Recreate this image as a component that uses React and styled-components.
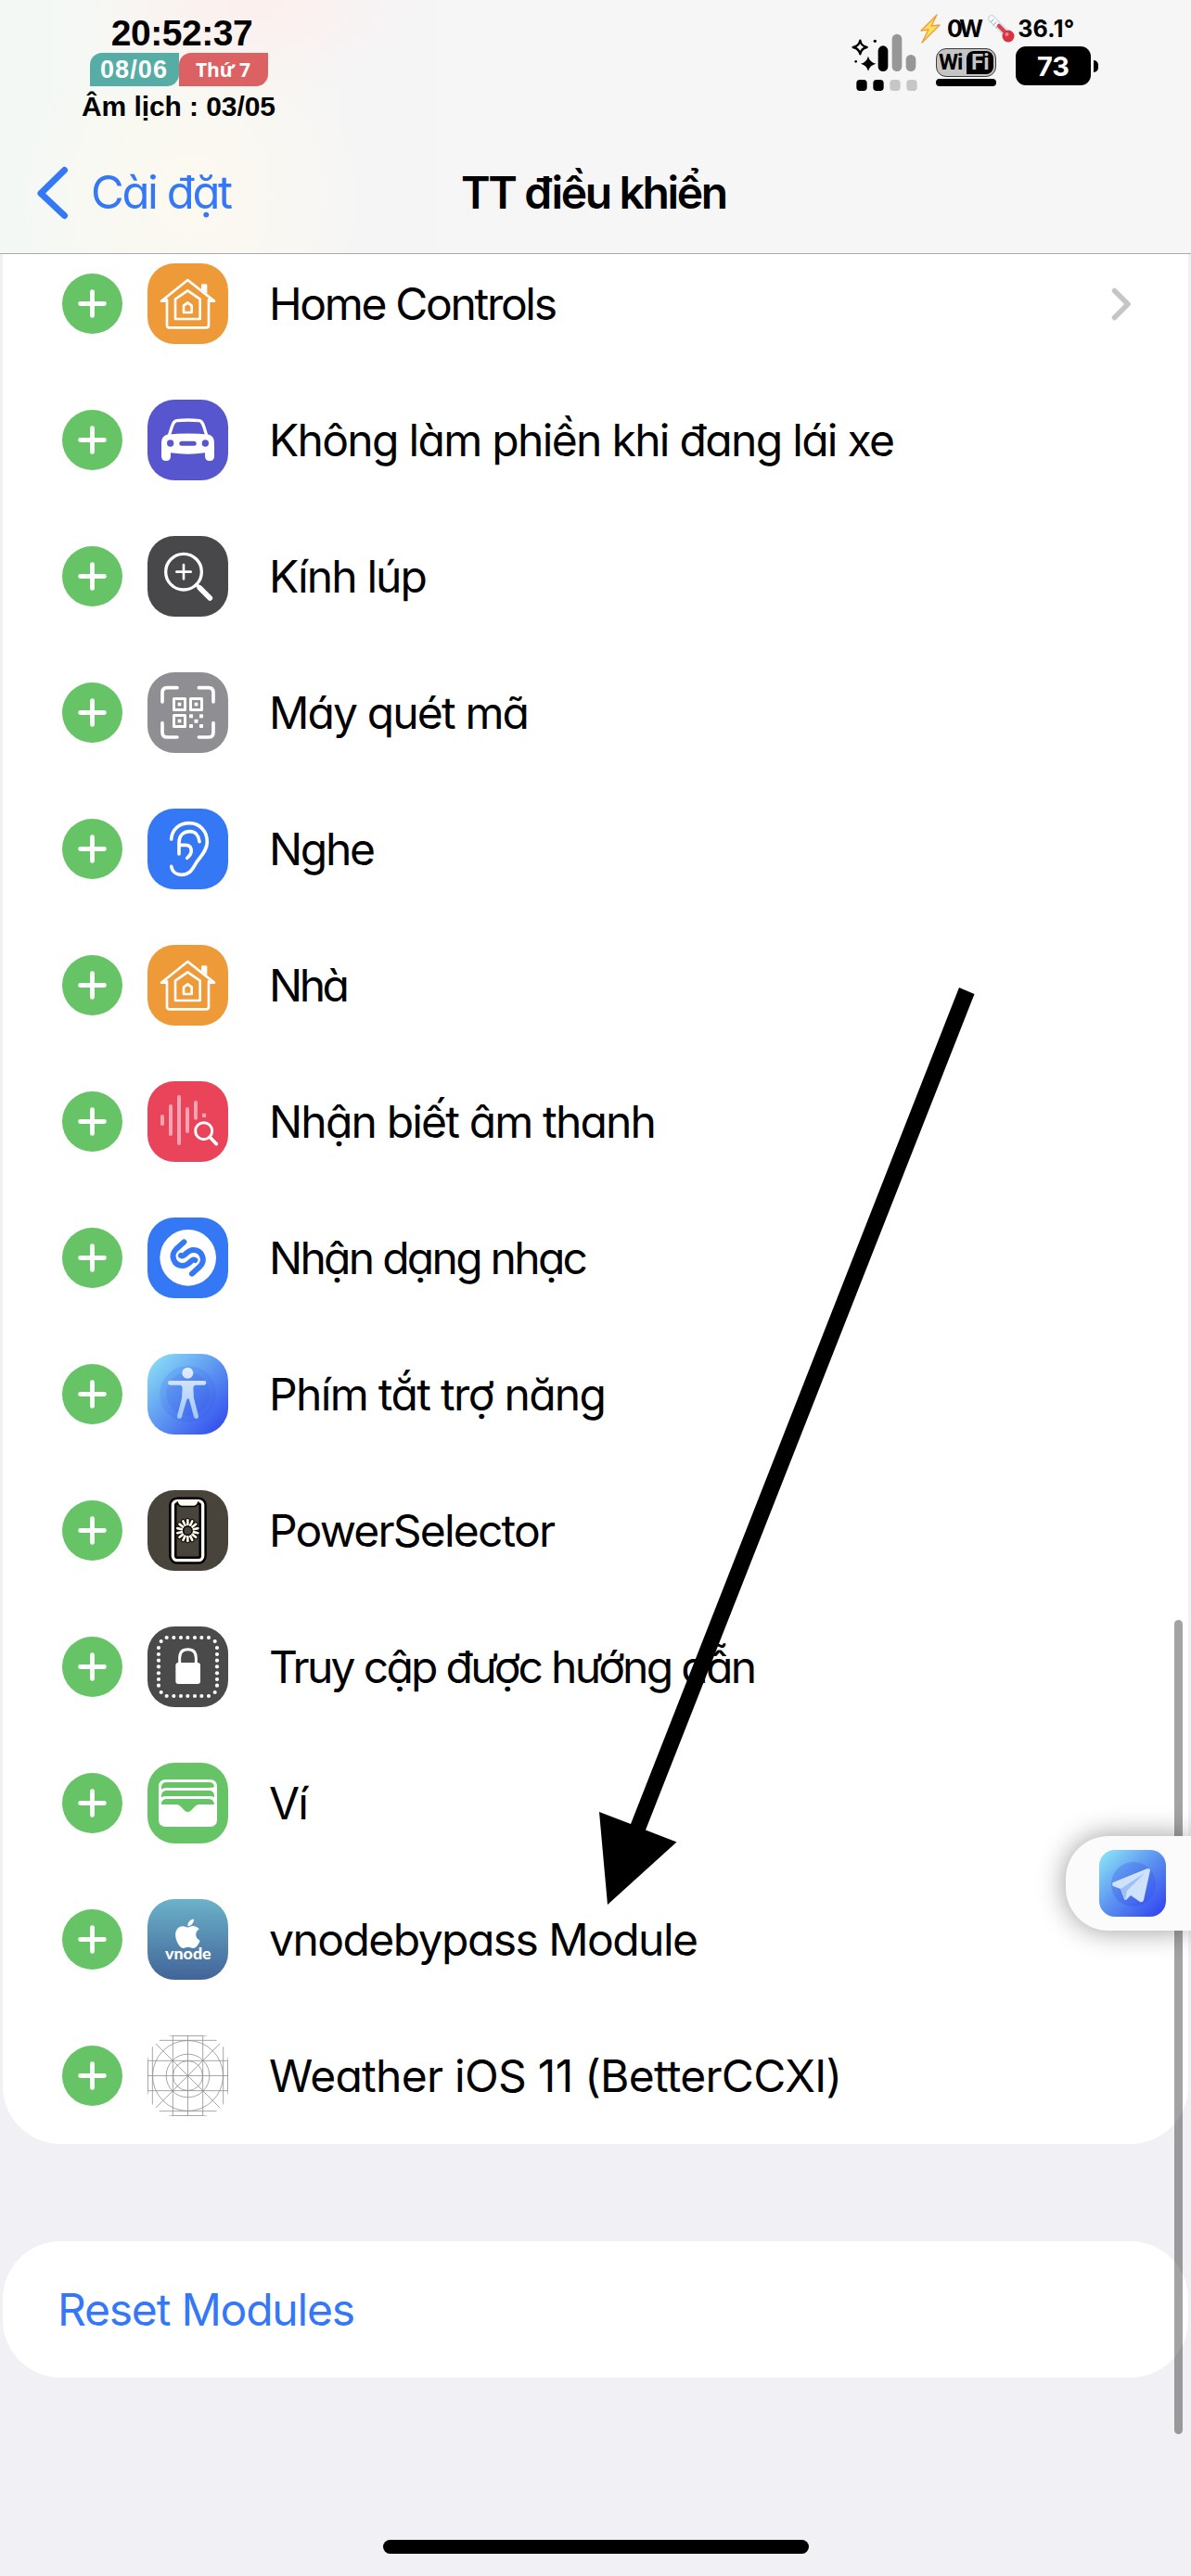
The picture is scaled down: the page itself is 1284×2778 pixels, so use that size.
import React, { useLayoutEffect, useRef, useState } from "react";
import styled, { createGlobalStyle } from "styled-components";
import { FaApple } from "react-icons/fa";

const GlobalStyle = createGlobalStyle`
  *, *::before, *::after { box-sizing: border-box; }
  html, body { margin: 0; padding: 0; }
  body { background: #f0f0f5; }
  svg { display: block; flex: none; }
`;

const Screen = styled.div`
  position: relative;
  width: 1284px;
  height: 2778px;
  overflow: hidden;
  display: flex;
  flex-direction: column;
  background: #f0f0f5;
  color: #000;
  font-family: Inter, "Noto Sans", sans-serif;
  font-feature-settings: "cv11" 1;
`;

/* ---------- text whose tracking is computed to span a given width ---------- */

const Fitted = styled.span`
  display: inline-block;
  white-space: pre;
  flex: none;
`;

function FitText({ width, children, className }) {
  const ref = useRef(null);
  const [spacing, setSpacing] = useState(0);
  useLayoutEffect(() => {
    const el = ref.current;
    el.style.letterSpacing = "0px";
    const natural = el.getBoundingClientRect().width;
    const next = (width - natural) / (children.length - 1);
    el.style.letterSpacing = `${next}px`;
    setSpacing(next);
  }, [width, children]);
  return (
    <Fitted ref={ref} className={className} style={{ letterSpacing: `${spacing}px` }}>
      {children}
    </Fitted>
  );
}

/* ---------- header ---------- */

const Header = styled.header`
  flex: none;
  height: 274px;
  border-bottom: 1px solid #a9a9ad;
  display: flex;
  flex-direction: column;
  z-index: 1;
  background:
    radial-gradient(ellipse 190px 110px at 270px 0, rgba(255, 236, 234, 0.7), rgba(255, 236, 234, 0)),
    radial-gradient(ellipse 190px 190px at 205px 210px, rgba(252, 249, 238, 0.85), rgba(252, 249, 238, 0)),
    linear-gradient(90deg, #f3f8f5 0, #f6f8f4 130px, #f7f6f4 270px, #f5f5f6 400px, #f6f6f6 700px, #f6f6f6 100%);
`;

const StatusBar = styled.div`
  height: 142px;
  display: flex;
  justify-content: space-between;
`;

const ClockBlock = styled.div`
  width: 385px;
  padding-top: 15px;
  display: flex;
  flex-direction: column;
  align-items: center;
  font-family: "Liberation Sans", Arial, sans-serif;
  font-weight: 700;
`;

const Time = styled(FitText)`
  font-size: 39px;
  line-height: 42px;
  margin-left: 7px;
`;

const Badges = styled.div`
  display: flex;
  height: 36px;
`;

const Badge = styled.div`
  width: 96px;
  height: 36px;
  display: flex;
  align-items: center;
  justify-content: center;
  color: #fff;
  background: ${(p) => p.$color};
  border-radius: 13px 0 13px 0;
  font-size: ${(p) => p.$size}px;
  font-family: ${(p) => p.$font};
  line-height: 36px;
`;

const Lunar = styled(FitText)`
  font-size: 30px;
  line-height: 34px;
  margin-top: 5px;
`;

const Indicators = styled.div`
  display: flex;
  padding: 14px 100px 0 0;
`;

const IndicatorColumn = styled.div`
  display: flex;
  flex-direction: column;
  margin-left: 3px;
`;

const Readings = styled.div`
  display: flex;
  align-items: center;
  height: 34px;
  font-weight: 700;
  font-size: 25px;
  line-height: 34px;
`;

const ReadingPower = styled(FitText)`
  margin-left: 7px;
`;

const Thermo = styled.div`
  margin: 0 2px 0 9px;
`;

const PowerIcons = styled.div`
  display: flex;
  align-items: flex-start;
  padding-left: 17px;
`;

const WifiColumn = styled.div`
  display: flex;
  flex-direction: column;
  gap: 2px;
  padding-top: 4px;
  margin-right: 21px;
`;

const WifiBadge = styled.div`
  width: 65px;
  height: 31px;
  display: flex;
  padding: 2px;
  border: 1.5px solid #3a3a3a;
  border-radius: 11px;
  background: #c4c4c4;
  font-family: Roboto, "Open Sans", sans-serif;
  font-weight: 700;
  font-size: 24px;
  line-height: 25px;
`;

const WifiLeft = styled.span`
  width: 30px;
  letter-spacing: -1px;
`;

const WifiRight = styled.span`
  width: 29px;
  padding-left: 5px;
  color: #c4c4c4;
  background: #000;
  border-radius: 8px 8px 8px 0;
`;

const WifiBar = styled.div`
  height: 8px;
  border-radius: 4px;
  background: #000;
`;

const BatteryWrap = styled.div`
  display: flex;
  align-items: center;
  gap: 3px;
  padding-top: 2px;
`;

const BatteryBody = styled.div`
  width: 81px;
  height: 42px;
  border-radius: 11px;
  background: #000;
  color: #fff;
  font-size: 29px;
  font-weight: 700;
  line-height: 43px;
  text-align: center;
`;

const BatteryNub = styled.div`
  width: 5px;
  height: 13px;
  border-radius: 0 6px 6px 0;
  background: #000;
`;

const NavBar = styled.div`
  flex: 1;
  display: grid;
  grid-template-columns: 497px 1fr;
  align-items: center;
`;

const Back = styled.div`
  display: flex;
  align-items: center;
  padding-left: 39px;
  gap: 24px;
  color: #3478f6;
  font-size: 49px;
  line-height: 60px;
`;

const Title = styled(FitText)`
  justify-self: start;
  font-size: 48px;
  font-weight: 600;
  line-height: 60px;
`;

/* ---------- list ---------- */

const Body = styled.main`
  flex: 1;
  min-height: 0;
  overflow: hidden;
  padding: 0 3px;
`;

const Card = styled.section`
  background: #fff;
  border-radius: ${(p) => (p.$continued ? "0 0 62px 62px" : "62px")};
  overflow: hidden;
  margin-top: ${(p) => p.$top}px;
`;

const Row = styled.div`
  height: 147px;
  display: flex;
  align-items: center;
  padding: 0 61px 0 64px;
`;

const AddButton = styled.div`
  width: 65px;
  height: 65px;
  border-radius: 50%;
  background: #66c466;
  display: flex;
  align-items: center;
  justify-content: center;
`;

const Tile = styled.div`
  width: 87px;
  height: 87px;
  margin: 0 44px 0 27px;
  border-radius: 29px;
  overflow: hidden;
  background: ${(p) => p.$bg};
`;

const Label = styled(FitText)`
  font-size: 48px;
  line-height: 60px;
`;

const Spacer = styled.div`
  flex: 1;
`;

const ResetRow = styled(Row)`
  padding-left: 59px;
  color: #3478f6;
`;

/* ---------- overlays ---------- */

const ScrollThumb = styled.div`
  position: absolute;
  left: 1266px;
  top: 1747px;
  width: 9px;
  height: 878px;
  border-radius: 5px;
  background: rgba(0, 0, 0, 0.36);
`;

const SideTab = styled.div`
  position: absolute;
  left: 1149px;
  top: 1980px;
  width: 135px;
  height: 102px;
  padding: 15px 0 0 36px;
  border-radius: 46px 0 0 46px;
  background: #fbfbfb;
  box-shadow: 0 0 30px rgba(0, 0, 0, 0.4);
`;

const SideIcon = styled.div`
  width: 72px;
  height: 72px;
  border-radius: 17px;
  overflow: hidden;
  background: linear-gradient(135deg, #8eeaf8 0%, #5f98f1 45%, #2d3df0 100%);
`;

const ArrowLayer = styled.svg`
  position: absolute;
  left: 0;
  top: 0;
`;

const HomeIndicator = styled.div`
  position: absolute;
  left: 413px;
  top: 2739px;
  width: 459px;
  height: 15px;
  border-radius: 8px;
  background: #000;
`;

/* ---------- drawings ---------- */

const Glyph = ({ children, ...rest }) => (
  <svg width="87" height="87" viewBox="0 0 261 261" fill="none" stroke="#fff" strokeLinecap="round" strokeLinejoin="round" {...rest}>
    {children}
  </svg>
);

const HomeGlyph = () => (
  <Glyph strokeWidth="8">
    <path d="M174 84V71Q174 67 178 67H189Q193 67 193 71V98Z" fill="#fff" stroke="none" />
    <path d="M63 118V200Q63 208 71 208H190Q198 208 198 200V118" />
    <path d="M45 122L130 54L216 122H204M45 122H60" />
    <path d="M90 180V116L130 88L170 116V180Z" />
    <path d="M117 159V137L130 127L143 137V159Z" />
  </Glyph>
);

const CarGlyph = () => (
  <Glyph>
    <path d="M69 118C78 96 80 70 94 68Q131 64 168 68C181 70 184 96 192 118" strokeWidth="10" />
    <path d="M45 138Q46 118 62 113Q131 106 200 113Q215 118 216 138V183Q216 198 201 198Q186 198 186 183V172Q131 180 75 172V183Q75 198 60 198Q45 198 45 183Z" fill="#fff" stroke="none" />
    <g fill="#5856ce" stroke="none">
      <circle cx="74" cy="141" r="11" />
      <circle cx="187" cy="141" r="11" />
      <rect x="103" y="134" width="55" height="15" rx="7.5" />
    </g>
  </Glyph>
);

const MagnifierGlyph = () => (
  <Glyph>
    <circle cx="117" cy="116" r="58" strokeWidth="10" />
    <path d="M117 93V139M94 116H140" strokeWidth="8" />
    <path d="M159 158L170 169" strokeWidth="12" />
    <path d="M169 168L202 201" strokeWidth="17" />
  </Glyph>
);

const QrGlyph = () => (
  <Glyph>
    <path strokeWidth="11" d="M48 96V66Q48 50 64 50H96M166 50H197Q213 50 213 66V96M213 164V194Q213 210 197 210H166M96 210H64Q48 210 48 194V164" />
    {[[81, 81], [135, 81], [81, 135]].map(([x, y]) => (
      <g key={`${x}-${y}`}>
        <rect x={x + 4.5} y={y + 4.5} width="36" height="36" strokeWidth="9" />
        <rect x={x + 17} y={y + 17} width="11" height="11" fill="#fff" stroke="none" />
      </g>
    ))}
    {[[135, 136], [168, 136], [151.5, 152], [135, 168], [168, 168]].map(([x, y]) => (
      <rect key={`${x}-${y}`} x={x} y={y} width="12" height="12" rx="2" fill="#fff" stroke="none" />
    ))}
  </Glyph>
);

const EarGlyph = () => (
  <Glyph strokeWidth="11">
    <path d="M77 99C80 66 104 47 135 47C169 47 193 73 193 108C193 135 173 153 160 172C147 192 140 214 110 214C91 214 79 202 77 187" />
    <path d="M168 107C166 87 155 74 137 74C115 74 102 88 102 110V147" />
    <path d="M104 118H124C144 118 149 144 128 160" />
  </Glyph>
);

const SoundGlyph = () => (
  <Glyph>
    <path strokeWidth="12" stroke="#f8a5b1" d="M48 114V138M75 81V171M102 51V201M129 90V162M156 69V119" />
    <path strokeWidth="12" stroke="#f8a5b1" strokeLinecap="butt" d="M183 104V117" />
    <circle cx="182" cy="161" r="36" fill="#ea445a" stroke="none" />
    <circle cx="182" cy="161" r="27" strokeWidth="9" />
    <path d="M203 182L223 203" strokeWidth="11" />
  </Glyph>
);

const ShazamGlyph = () => (
  <Glyph>
    <circle cx="131" cy="130" r="91" fill="#fff" stroke="none" />
    <g stroke="#3478f6" strokeWidth="18">
      <path d="M118 79L93 102C71 124 87 156 114 156C128 156 135 146 144 139Q149 135 154 138" />
      <path d="M144 182L169 159C191 137 175 105 148 105C134 105 127 115 118 122Q113 126 108 123" />
    </g>
  </Glyph>
);

const PersonGlyph = () => (
  <Glyph>
    <circle cx="131" cy="130" r="91" fill="#2745e8" fillOpacity=".12" stroke="none" />
    <circle cx="131" cy="130" r="70" fill="#2745e8" fillOpacity=".12" stroke="none" />
    <defs>
      <linearGradient id="person" x1="0" y1="45" x2="0" y2="211" gradientUnits="userSpaceOnUse">
        <stop stopColor="#e3edfd" />
        <stop offset="1" stopColor="#9fc6f9" />
      </linearGradient>
    </defs>
    <g fill="url(#person)" stroke="none">
      <circle cx="130" cy="62" r="18" />
      <path d="M73 87H183Q190 87 190 94Q190 101 183 101H156Q148 102 148 112L150 143L165 201Q166 210 158 210Q152 210 150 204L135 148Q131 142 127 148L111 204Q109 210 103 210Q95 210 96 201L111 143L113 112Q113 102 105 101H73Q66 101 66 94Q66 87 73 87Z" />
    </g>
  </Glyph>
);

const PhoneGlyph = () => (
  <Glyph>
    <rect x="82" y="35" width="97" height="192" rx="14" stroke="#000" strokeWidth="25" />
    <rect x="82" y="35" width="97" height="192" rx="14" stroke="#fffdf2" strokeWidth="10" />
    <path d="M94 37H167Q163 54 152 55H109Q98 54 94 37Z" fill="#000" stroke="none" />
    <path d="M98 36H163Q160 49 151 50H110Q101 49 98 36Z" fill="#fffbe8" stroke="none" />
    {[["#000", 14], ["#fffbe8", 8]].map(([color, w]) =>
      Array.from({ length: 14 }, (_, i) => (
        <path key={`${color}${i}`} d="M130 112V97" stroke={color} strokeWidth={w} transform={`rotate(${(i * 360) / 14} 130 131)`} />
      ))
    )}
    <circle cx="130" cy="131" r="16" fill="#000" stroke="none" />
    <circle cx="130" cy="131" r="12" fill="#49443b" stroke="none" />
  </Glyph>
);

const lockDots = [
  ...[62, 85, 108, 130, 153, 175, 198].flatMap((v) => [[v, 36], [v, 225]]),
  ...[69, 90, 110, 130, 151, 171, 191].flatMap((v) => [[36, v], [225, v]]),
  [44, 48], [218, 48], [44, 213], [218, 213],
];

const LockGlyph = () => (
  <Glyph>
    <g fill="#fff" stroke="none">
      {lockDots.map(([x, y]) => (
        <circle key={`${x}-${y}`} cx={x} cy={y} r="6.2" />
      ))}
      <rect x="91" y="117" width="80" height="69" rx="9" />
    </g>
    <path strokeWidth="9" d="M104 122V101Q104 74 130.500 74Q157 74 157 101V122" />
  </Glyph>
);

const WalletGlyph = () => (
  <Glyph>
    <path fill="#fff" stroke="none" d="M60 54H201Q225 54 225 78V184Q225 207 201 207H60Q36 207 36 184V78Q36 54 60 54Z" />
    <g fill="#66c466" stroke="none">
      <path d="M45 78Q46 63 62 63H199Q215 63 216 78Q210 81 198 81H63Q50 81 45 86Z" />
      <path d="M45 105Q47 90 62 90H199Q214 90 216 105V112Q212 108 198 108H63Q50 108 45 112Z" />
      <path d="M45 132Q47 117 62 117H199Q214 117 216 135H168C150 135 145 159 130.500 159C116 159 111 135 93 135H45Z" />
    </g>
  </Glyph>
);

const VnodeGlyph = () => (
  <Glyph>
    <FaApple x="76" y="58" size={108} color="#fff" stroke="none" />
    <text x="57" y="195" fill="#fff" stroke="none" fontFamily="Lato, sans-serif" fontWeight="900" fontSize="50" textLength="149" lengthAdjust="spacingAndGlyphs">
      vnode
    </text>
  </Glyph>
);

const GridGlyph = () => (
  <Glyph stroke="#8f8f91" strokeWidth="2.4" strokeLinecap="butt">
    <path d="M82 0V261M130.500 0V261M179 0V261M0 82H261M0 130.500H261M0 179H261M38 16H224M38 245H224M16 36V224M245 36V224M70 1.500H192M70 259.500H192M1.500 70V192M259.500 70V192M26 26L235 235M235 26L26 235" />
    <circle cx="130.500" cy="130.500" r="114" />
    <circle cx="130.500" cy="130.500" r="70" />
    <circle cx="130.500" cy="130.500" r="48" />
  </Glyph>
);

const PlusIcon = () => (
  <svg width="31" height="31" viewBox="0 0 31 31" stroke="#fff" strokeWidth="4.800" strokeLinecap="round">
    <path d="M15.500 2.600V28.400M2.600 15.500H28.400" />
  </svg>
);

const BackChevron = () => (
  <svg width="35" height="58" viewBox="0 0 35 58" fill="none" stroke="#3478f6" strokeWidth="7" strokeLinecap="round" strokeLinejoin="round">
    <path d="M30.500 4.500L5 29.500L30.500 53.500" />
  </svg>
);

const RowChevron = () => (
  <svg width="22" height="36" viewBox="0 0 22 36" fill="none" stroke="#c5c5c7" strokeWidth="5.500" strokeLinecap="round" strokeLinejoin="round">
    <path d="M3.500 3.500L18 18L3.500 32.500" />
  </svg>
);

const SignalIcon = () => (
  <svg width="72" height="86" viewBox="176 42 216 258">
    <path d="M207 131Q210 149 229 153Q210 157 207 175Q203 157 184 153Q203 149 207 131Z" fill="none" stroke="#000" strokeWidth="7" strokeLinejoin="round" />
    <path d="M233 182Q238 201 258 206Q238 211 233 230Q228 211 209 206Q228 201 233 182Z" />
    <circle cx="255" cy="133" r="5" />
    <circle cx="193" cy="199" r="4" />
    <rect x="265" y="148" width="32" height="83" rx="16" />
    <rect x="310" y="110" width="32" height="121" rx="16" fill="#979797" />
    <rect x="355" y="177" width="32" height="54" rx="16" fill="#979797" />
    {[195, 249, 303, 357].map((x, i) => (
      <rect key={x} x={x} y="258" width="34" height="36" rx="11" fill={i < 2 ? "#000" : "#c6c6c6"} />
    ))}
  </svg>
);

const BoltIcon = () => (
  <svg width="22" height="32" viewBox="0 0 22 32">
    <path d="M18 1L1 18L9 17L2 31L21 12L12 13Z" fill="#fde05c" stroke="#eda03a" strokeWidth="1.400" strokeLinejoin="round" />
  </svg>
);

const ThermometerIcon = () => (
  <svg width="30" height="31" viewBox="0 0 30 31" fill="none" strokeLinecap="round">
    <path d="M4 4L20 20" stroke="#c9dbe0" strokeWidth="8" />
    <path d="M4 4L20 20" stroke="#f4f8f9" strokeWidth="5.500" />
    <path d="M3 8L6 5M6 11L9 8M9 14L12 11" stroke="#8fa3a8" strokeWidth="1" />
    <path d="M12 12L20 20" stroke="#d6434f" strokeWidth="4.500" />
    <circle cx="22" cy="23" r="6.500" fill="#d8333f" />
    <circle cx="20.500" cy="21" r="2" fill="#f08a90" />
  </svg>
);

const PlaneIcon = () => (
  <svg width="72" height="72" viewBox="0 0 72 72">
    <circle cx="37" cy="37" r="24" fill="#2745e8" fillOpacity=".25" />
    <path d="M15 35Q13 37 15 39L23 42L27 53Q28 55 30 53L34 49L44 56Q47 57 48 54L55 22Q55 20 52 20Z" fill="#cfe2fc" />
    <path d="M23 42L49 25L30 44L28 54Z" fill="#9dc0f8" />
  </svg>
);

/* ---------- data ---------- */

const modules = [
  { name: "Home Controls", width: 311, bg: "#ee9a38", Icon: HomeGlyph, chevron: true },
  { name: "Không làm phiền khi đang lái xe", width: 675, bg: "#5856ce", Icon: CarGlyph },
  { name: "Kính lúp", width: 171, bg: "#48484a", Icon: MagnifierGlyph },
  { name: "Máy quét mã", width: 281, bg: "#8e8e93", Icon: QrGlyph },
  { name: "Nghe", width: 115, bg: "#3478f6", Icon: EarGlyph },
  { name: "Nhà", width: 87, bg: "#ee9a38", Icon: HomeGlyph },
  { name: "Nhận biết âm thanh", width: 418, bg: "#ea445a", Icon: SoundGlyph },
  { name: "Nhận dạng nhạc", width: 344, bg: "#3478f6", Icon: ShazamGlyph },
  { name: "Phím tắt trợ năng", width: 364, bg: "linear-gradient(135deg, #8fe6f6 0%, #619df2 45%, #2d42ee 100%)", Icon: PersonGlyph },
  { name: "PowerSelector", width: 309, bg: "#49443b", Icon: PhoneGlyph },
  { name: "Truy cập được hướng dẫn", width: 526, bg: "#4a4a4a", Icon: LockGlyph },
  { name: "Ví", width: 43, bg: "#66c466", Icon: WalletGlyph },
  { name: "vnodebypass Module", width: 463, bg: "linear-gradient(#6cb2c9, #416499)", Icon: VnodeGlyph },
  { name: "Weather iOS 11 (BetterCCXI)", width: 618, bg: "#fff", Icon: GridGlyph },
];

export default function App() {
  return (
    <Screen>
      <GlobalStyle />
      <Header>
        <StatusBar>
          <ClockBlock>
            <Time width={153}>20:52:37</Time>
            <Badges>
              <Badge $color="#55ada5" $size={27} $font='"Liberation Sans", sans-serif'>
                <FitText width={72}>08/06</FitText>
              </Badge>
              <Badge $color="#db6163" $size={21} $font='"Open Sans", sans-serif'>
                <FitText width={59}>Thứ 7</FitText>
              </Badge>
            </Badges>
            <Lunar width={209}>Âm lịch : 03/05</Lunar>
          </ClockBlock>
          <Indicators>
            <SignalIcon />
            <IndicatorColumn>
              <Readings>
                <BoltIcon />
                <ReadingPower width={39}>0W</ReadingPower>
                <Thermo>
                  <ThermometerIcon />
                </Thermo>
                <FitText width={61}>36.1°</FitText>
              </Readings>
              <PowerIcons>
                <WifiColumn>
                  <WifiBadge>
                    <WifiLeft>Wi</WifiLeft>
                    <WifiRight>Fi</WifiRight>
                  </WifiBadge>
                  <WifiBar />
                </WifiColumn>
                <BatteryWrap>
                  <BatteryBody>73</BatteryBody>
                  <BatteryNub />
                </BatteryWrap>
              </PowerIcons>
            </IndicatorColumn>
          </Indicators>
        </StatusBar>
        <NavBar>
          <Back>
            <BackChevron />
            <FitText width={153}>Cài đặt</FitText>
          </Back>
          <Title width={288}>TT điều khiển</Title>
        </NavBar>
      </Header>

      <Body>
        <Card $top={-20} $continued>
          {modules.map(({ name, width, bg, Icon, chevron }) => (
            <Row key={name}>
              <AddButton>
                <PlusIcon />
              </AddButton>
              <Tile $bg={bg}>
                <Icon />
              </Tile>
              <Label width={width}>{name}</Label>
              <Spacer />
              {chevron && <RowChevron />}
            </Row>
          ))}
        </Card>
        <Card $top={105}>
          <ResetRow>
            <Label width={321}>Reset Modules</Label>
          </ResetRow>
        </Card>
      </Body>

      <ScrollThumb />
      <SideTab>
        <SideIcon>
          <PlaneIcon />
        </SideIcon>
      </SideTab>
      <ArrowLayer width="1284" height="2778" viewBox="0 0 1284 2778">
        <path d="M1034 1065L1050.500 1072L696 1973.500L729.500 1986.500L655 2054L646 1954L680 1967Z" />
      </ArrowLayer>
      <HomeIndicator />
    </Screen>
  );
}
